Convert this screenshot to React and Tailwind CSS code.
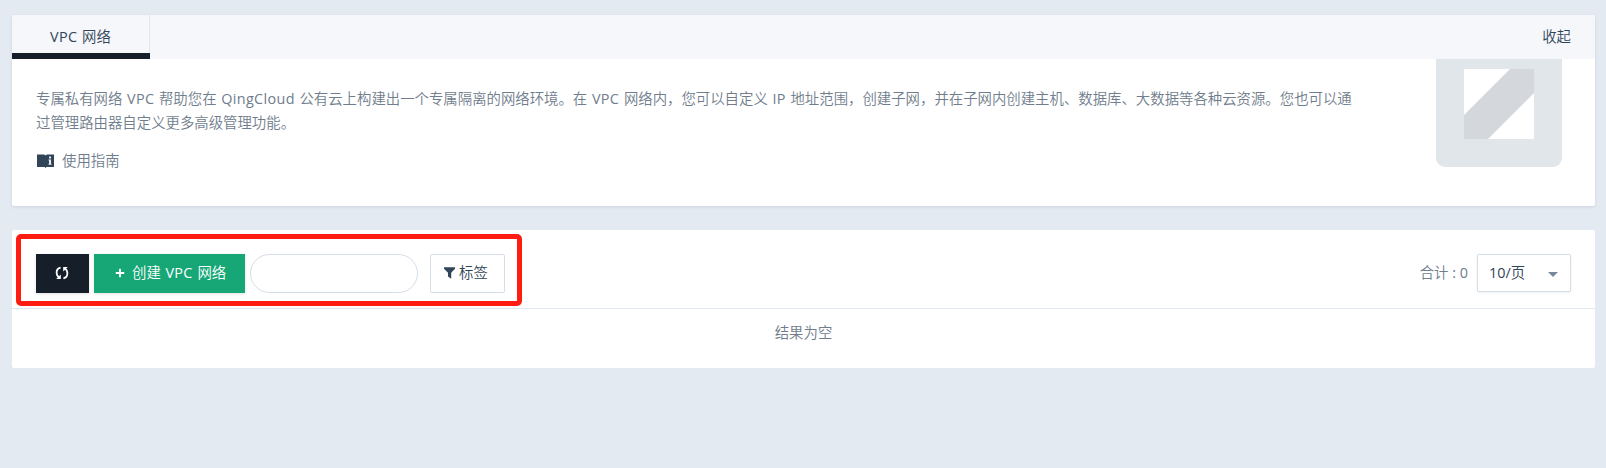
import React from "react";

function Latin({ children }) {
  return <span className="font-normal tracking-[0.35px]">{children}</span>;
}

function GuideIcon() {
  return (
    <svg width="17" height="14" viewBox="0 0 17 14" className="block">
      <path
        d="M0 .4H6.500Q8 .5 8.500 1.600Q9 .5 10.500 .4H17V13H9.400l-.9 1-.9-1H0z"
        fill="#324558"
      />
      <path d="M12 2.400h2v2h-2zM11.500 5.500H14v4.300h.5v1h-3v-1h.5V6.500h-.5z" fill="#e4ebf1" />
    </svg>
  );
}

function RefreshIcon() {
  return (
    <svg width="14" height="14" viewBox="0 0 14 14" className="block" fill="none" stroke="#fff">
      <path d="M5.600 1.700C2.900 2.200 1.500 4.400 1.600 7c.1 1.900 1 3.400 2.400 4.400" strokeWidth="1.800" />
      <path d="M8.400 12.300c2.700-.5 4.100-2.700 4-5.300-.1-1.900-1-3.400-2.400-4.400" strokeWidth="1.800" />
      <path d="M1.200 13H5.800V8.400z" fill="#fff" stroke="none" />
      <path d="M12.800 1H8.200V5.600z" fill="#fff" stroke="none" />
    </svg>
  );
}

function VpcLogo() {
  return (
    <svg width="126" height="126" viewBox="0 0 126 126" className="-mt-[18px] block shrink-0">
      <rect width="126" height="126" rx="9" fill="#e1e6ea" />
      <rect x="28" y="28" width="70" height="70" fill="#d4d7dc" />
      <path d="M28 28h46L28 74zM98 98H52l46-46z" fill="#fff" />
    </svg>
  );
}

function IntroCard() {
  return (
    <section className="flex h-[191px] flex-col overflow-hidden rounded-[2px] bg-white shadow-[0_1px_3px_rgba(40,60,80,0.12)]">
      <header className="relative z-10 flex h-11 shrink-0 justify-between bg-[#f5f7fb] pr-6">
        <div className="flex w-[138px] flex-col">
          <div className="flex h-[38px] items-center justify-center border-r border-[#e3e7ec] pt-[5px] text-[#324558]">
            <span>
              <Latin>VPC</Latin> 网络
            </span>
          </div>
          <div className="h-1.5 bg-[#161f29]" />
        </div>
        <div className="flex h-11 items-center text-[#324558]">收起</div>
      </header>
      <div className="flex justify-between pl-6 pr-[33px]">
        <div className="pt-7">
          <p className="whitespace-nowrap leading-6">
            专属私有网络 <Latin>VPC</Latin> 帮助您在 <Latin>QingCloud</Latin>{" "}
            公有云上构建出一个专属隔离的网络环境。在 <Latin>VPC</Latin> 网络内，您可以自定义 <Latin>IP</Latin>{" "}
            地址范围，创建子网，并在子网内创建主机、数据库、大数据等各种云资源。您也可以通
            <br />
            过管理路由器自定义更多高级管理功能。
          </p>
          <div className="mt-[14px] flex h-6 items-center gap-2 pl-px">
            <GuideIcon />
            <span>使用指南</span>
          </div>
        </div>
        <VpcLogo />
      </div>
    </section>
  );
}

function ListCard() {
  return (
    <section className="relative mt-6 h-[138px] rounded-[2px] bg-white">
      <div className="flex h-[79px] items-start justify-between border-b border-[#e0e7ee] px-6 pt-6">
        <div className="flex">
          <button className="flex h-[39px] w-[53px] items-center justify-center bg-[#161f29] pb-px pr-px shadow-[0_1px_3px_rgba(0,0,0,0.12)]">
            <RefreshIcon />
          </button>
          <button className="ml-[5px] flex h-[39px] w-[151px] items-center bg-[#17a777] pb-[2px] pl-[21px] text-white shadow-[0_1px_3px_rgba(0,0,0,0.12)] [word-spacing:0.9px]">
            <svg width="10" height="10" viewBox="0 0 10 10" className="mr-[7px] mt-px block">
              <path d="M5 .8v8.400M.8 5h8.400" stroke="#fff" strokeWidth="1.800" />
            </svg>
            <span className="whitespace-nowrap">
              创建 <Latin>VPC</Latin> 网络
            </span>
          </button>
          <input className="ml-[5px] h-[39px] w-[168px] rounded-full border border-[#d5dde7] bg-white outline-none" />
          <button className="ml-3 flex h-[39px] w-[75px] items-center rounded-[2px] border border-[#d5dde7] pb-[2px] pl-[13px] text-[#324558]">
            <svg width="11" height="12" viewBox="0 0 11 12" className="mr-[4px] block">
              <path d="M0 .3h11v1.500L7.200 5.800V11.800L4 9.500V5.800L0 1.800z" fill="#324558" />
            </svg>
            <span className="whitespace-nowrap">标签</span>
          </button>
        </div>
        <div className="flex">
          <span className="mr-[9px] flex h-[37px] items-center whitespace-nowrap [word-spacing:0px]">
            <span>
              合计 <span className="font-normal">: 0</span>
            </span>
          </span>
          <div className="flex h-[38px] w-[94px] items-center justify-between rounded-[2px] border border-[#d5dde7] pl-[11px] pr-3 text-[#324558] shadow-[0_1px_3px_rgba(40,60,80,0.08)]">
            <span>
              <span className="font-normal">10/</span>页
            </span>
            <svg width="10" height="5" viewBox="0 0 10 5" className="mt-[3px] block">
              <path d="M0 0h10L5 5z" fill="#79879a" />
            </svg>
          </div>
        </div>
      </div>
      <div className="flex h-[47px] items-center justify-center">结果为空</div>
      <div className="pointer-events-none absolute left-1 top-1 h-[72px] w-[506px] rounded-[5px] border-5 border-[#ff1d12]" />
    </section>
  );
}

export default function App() {
  return (
    <main className="h-[468px] overflow-hidden bg-[#e3eaf2] pl-3 pr-[11px] pt-[15px] font-['Open_Sans','Noto_Sans_CJK_SC',sans-serif] text-[14.400px] font-[360] leading-6 text-[#6f7d8c] [word-spacing:0.9px]">
      <IntroCard />
      <ListCard />
    </main>
  );
}
